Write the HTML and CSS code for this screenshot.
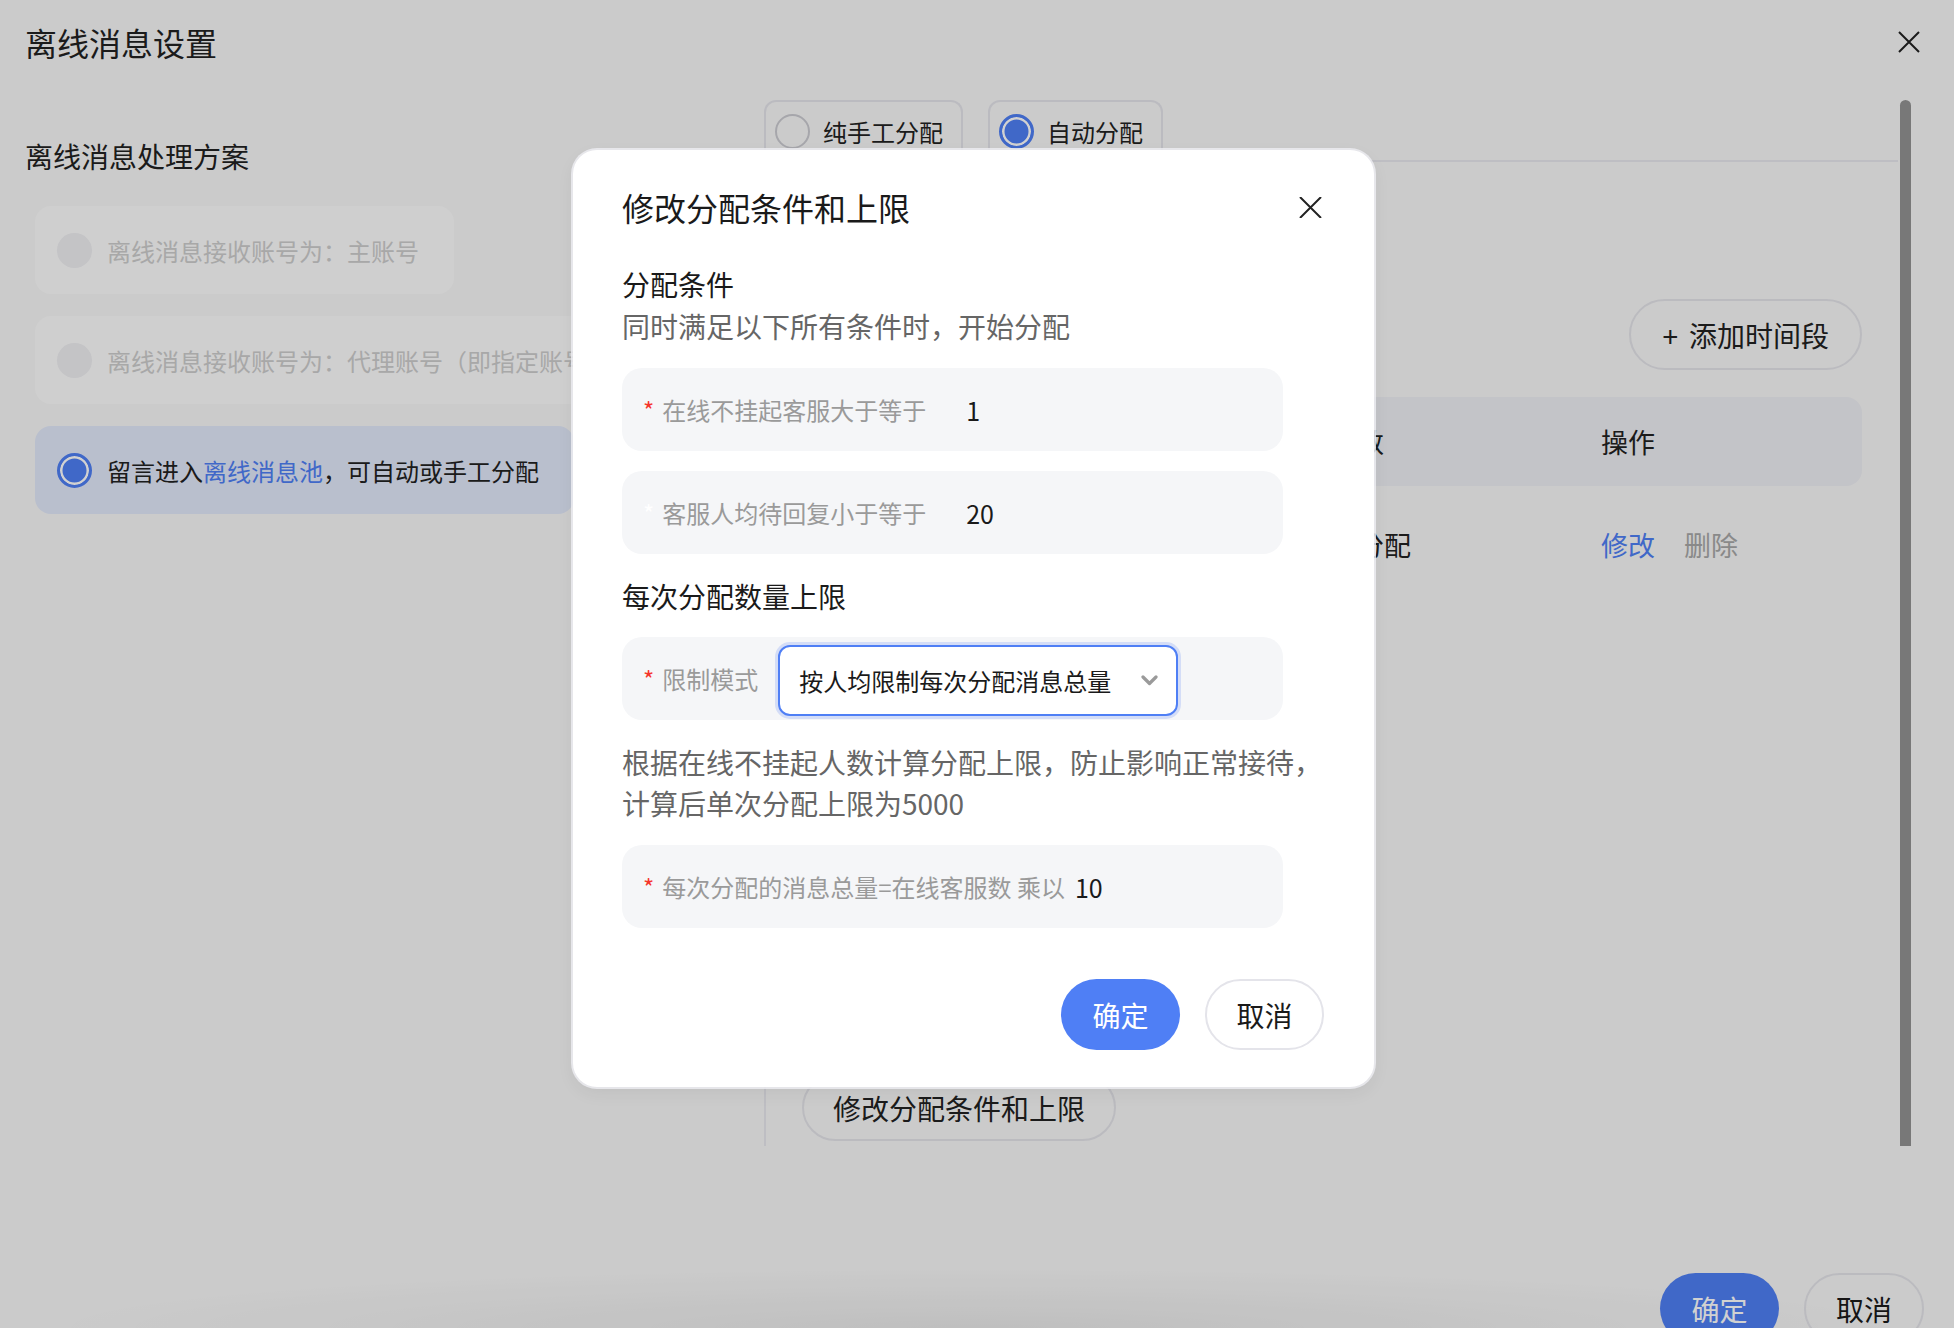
FILE: index.html
```html
<!DOCTYPE html>
<html lang="zh-CN">
<head>
<meta charset="utf-8">
<title>离线消息设置</title>
<link rel="stylesheet" href="styles.css">
</head>
<body>
<div class="page">
  <header class="page-head">
    <h1 class="page-title">离线消息设置</h1>
    <button class="icon-close" aria-label="关闭">
      <svg viewBox="0 0 22 22"><path d="M1 1L21 21M21 1L1 21"/></svg>
    </button>
  </header>

  <main class="page-body">
    <section class="plan-col">
      <h2 class="plan-title">离线消息处理方案</h2>
      <div class="plan-list">
        <label class="plan-card is-disabled"><span class="radio"></span><span>离线消息接收账号为：主账号</span></label>
        <label class="plan-card is-disabled"><span class="radio"></span><span>离线消息接收账号为：代理账号（即指定账号）</span></label>
        <label class="plan-card is-checked"><span class="radio"></span><span>留言进入<a class="link">离线消息池</a>，可自动或手工分配</span></label>
      </div>
    </section>

    <section class="assign-col">
      <div class="assign-tabs">
        <div class="assign-tab"><span class="radio"></span>纯手工分配</div>
        <div class="assign-tab is-checked"><span class="radio"></span>自动分配</div>
      </div>
      <div class="assign-panel">
        <div class="toolbar">
          <button class="btn-outline btn-add"><span class="plus">+</span>添加时间段</button>
        </div>
        <div class="table">
          <div class="tr th"><span></span><span>分配数</span><span>操作</span></div>
          <div class="tr td"><span></span><span>自动分配</span><span class="ops"><a class="link">修改</a><a class="muted">删除</a></span></div>
        </div>
        <button class="btn-outline btn-edit">修改分配条件和上限</button>
      </div>
    </section>

    <div class="scrollbar"></div>
  </main>

  <footer class="page-foot">
    <button class="btn-primary">确定</button>
    <button class="btn-default">取消</button>
  </footer>
</div>

<div class="mask"></div>

<div class="modal" role="dialog">
  <div class="modal-head">
    <h3 class="modal-title">修改分配条件和上限</h3>
    <button class="modal-close" aria-label="关闭">
      <svg viewBox="0 0 23 21"><path d="M1 0L22 21M22 0L1 21"/></svg>
    </button>
  </div>

  <div class="sec-title first">分配条件</div>
  <div class="sec-desc">同时满足以下所有条件时，开始分配</div>

  <div class="field field-first">
    <span class="req">*</span>
    <span class="field-label wide">在线不挂起客服大于等于</span>
    <span class="field-value">1</span>
  </div>
  <div class="field">
    <span class="req is-faint">*</span>
    <span class="field-label wide">客服人均待回复小于等于</span>
    <span class="field-value">20</span>
  </div>

  <div class="sec-title second">每次分配数量上限</div>

  <div class="field">
    <span class="req">*</span>
    <span class="field-label">限制模式</span>
    <div class="select">
      <span>按人均限制每次分配消息总量</span>
      <svg class="chev" viewBox="0 0 17 11"><path d="M2 2L8.5 8.5L15 2"/></svg>
    </div>
  </div>

  <p class="note">根据在线不挂起人数计算分配上限，防止影响正常接待，<br>计算后单次分配上限为5000</p>

  <div class="field field-last">
    <span class="req">*</span>
    <span class="field-label">每次分配的消息总量=在线客服数 乘以</span>
    <span class="field-value tight">10</span>
  </div>

  <div class="modal-foot">
    <button class="btn-primary">确定</button>
    <button class="btn-default">取消</button>
  </div>
</div>
</body>
</html>
```

FILE: styles.css
```css
* {
  box-sizing: border-box;
  margin: 0;
  padding: 0;
}

html,
body {
  width: 1954px;
  height: 1328px;
  overflow: hidden;
}

body {
  position: relative;
  font-family: "Noto Sans CJK SC", "Noto Sans", sans-serif;
  color: #222;
  background: #f8f8f8;
}

button {
  font-family: inherit;
  background: none;
  border: none;
  color: inherit;
  cursor: pointer;
}

.link {
  color: #4f7ff5;
}

.muted {
  color: #a8a8a8;
}

/* ---------- page ---------- */
.page {
  height: 1328px;
  display: flex;
  flex-direction: column;
}

.page-head {
  flex: none;
  height: 100px;
  display: flex;
  justify-content: space-between;
  align-items: flex-start;
  padding: 22px 34px 0 25px;
}

.page-title {
  font-size: 32px;
  line-height: 40px;
  font-weight: 400;
  color: #222;
}

.icon-close {
  width: 22px;
  height: 40px;
  display: flex;
  align-items: center;
  justify-content: center;
}

.icon-close svg {
  width: 22px;
  height: 22px;
  fill: none;
  stroke: #222;
  stroke-width: 2;
}

.page-body {
  flex: none;
  height: 1046px;
  display: flex;
}

/* left column */
.plan-col {
  flex: none;
  width: 764px;
  padding-left: 25px;
}

.plan-title {
  margin-top: 36px;
  font-size: 28px;
  line-height: 40px;
  font-weight: 400;
}

.plan-list {
  margin: 30px 0 0 10px;
  display: flex;
  flex-direction: column;
  align-items: flex-start;
  gap: 22px;
}

.plan-card {
  height: 88px;
  display: flex;
  align-items: center;
  gap: 15px;
  padding: 0 35px 0 22px;
  border-radius: 16px;
  background: #fdfdfd;
  font-size: 24px;
  white-space: nowrap;
}

.plan-card.is-disabled {
  color: #cdcdcd;
}

.plan-card.is-disabled .radio {
  background: #efeff2;
}

.plan-card.is-checked {
  background: #e2e9fa;
  color: #222;
}

.radio {
  flex: none;
  width: 35px;
  height: 35px;
  border-radius: 50%;
}

.is-checked .radio {
  background: #4f7ff5;
  border: 3px solid #4f7ff5;
  box-shadow: inset 0 0 0 2.5px #fff;
}

/* right column */
.assign-col {
  flex: none;
  width: 1134px;
  display: flex;
  flex-direction: column;
}

.assign-tabs {
  flex: none;
  height: 60px;
  display: flex;
  gap: 25px;
}

.assign-tab {
  height: 60px;
  display: flex;
  align-items: center;
  gap: 13px;
  padding: 0 18px 0 9px;
  border: 2px solid #e5e5eb;
  border-bottom: none;
  border-radius: 12px 12px 0 0;
  font-size: 24px;
  color: #222;
}

.assign-tab .radio {
  border: 2px solid #cbcbd1;
}

.assign-tab.is-checked .radio {
  border: 3px solid #4f7ff5;
}

.assign-panel {
  flex: 1;
  display: flex;
  flex-direction: column;
  padding: 0 36px 5px 36px;
  border-top: 2px solid #e8e8ee;
  border-left: 2px solid #e8e8ee;
}

.toolbar {
  margin-top: 137px;
  display: flex;
  justify-content: flex-end;
}

.btn-outline {
  height: 71px;
  border: 2px solid #e4e4ea;
  border-radius: 36px;
  font-size: 28px;
  line-height: 40px;
  color: #222;
  display: flex;
  align-items: center;
}

.btn-add {
  padding: 0 31px;
}

.plus {
  margin-right: 11px;
}

.btn-edit {
  margin-top: auto;
  align-self: flex-start;
  height: 67px;
  padding: 0 29px;
}

.table {
  margin-top: 27px;
}

.tr {
  display: grid;
  grid-template-columns: 501px 298px 1fr;
  align-items: center;
  font-size: 27px;
  color: #222;
}

.th {
  height: 89px;
  border-radius: 16px;
  background: #eeeff4;
}

.td {
  height: 116px;
}

.ops {
  display: flex;
  gap: 29px;
}

.scrollbar {
  flex: none;
  width: 11px;
  height: 1046px;
  margin-left: 2px;
  border-radius: 6px 6px 0 0;
  background: #939393;
}

/* footer */
.page-foot {
  flex: none;
  height: 182px;
  display: flex;
  justify-content: flex-end;
  gap: 25px;
  padding: 127px 30px 0 0;
  background: radial-gradient(ellipse 48% 60px at 50% 100%, rgba(0, 0, 0, 0.06), rgba(0, 0, 0, 0));
}

.btn-primary,
.btn-default {
  flex: none;
  width: 119px;
  height: 71px;
  border-radius: 36px;
  font-size: 28px;
  display: flex;
  align-items: center;
  justify-content: center;
}

.btn-primary {
  background: #4f7ff5;
  color: #fff;
}

.btn-default {
  border: 2px solid #e4e4ea;
  color: #1a1a1a;
}

.page-foot .btn-default {
  width: 120px;
}

/* ---------- mask + modal ---------- */
.mask {
  position: absolute;
  inset: 0;
  z-index: 10;
  background: rgba(0, 0, 0, 0.18);
}

.modal {
  position: absolute;
  left: 573px;
  top: 150px;
  z-index: 20;
  width: 801px;
  height: 937px;
  padding: 35px 50px 37px 49px;
  display: flex;
  flex-direction: column;
  background: #fff;
  border-radius: 24px;
  box-shadow: 0 0 0 2px rgba(236, 236, 241, 0.85), 0 6px 18px rgba(0, 0, 0, 0.06);
}

.modal-head {
  height: 44px;
  display: flex;
  justify-content: space-between;
  align-items: center;
}

.modal-title {
  font-size: 32px;
  line-height: 44px;
  font-weight: 400;
  color: #1a1a1a;
}

.modal-close {
  width: 23px;
  height: 44px;
  margin-right: 2px;
  display: flex;
  align-items: center;
  justify-content: center;
}

.modal-close svg {
  width: 23px;
  height: 21px;
  fill: none;
  stroke: #222;
  stroke-width: 2;
}

.sec-title {
  font-size: 28px;
  line-height: 42px;
  color: #1a1a1a;
}

.sec-title.first {
  margin-top: 34px;
}

.sec-title.second {
  margin-top: 21px;
}

.sec-desc {
  font-size: 28px;
  line-height: 42px;
  color: #666;
}

.field {
  width: 661px;
  height: 83px;
  flex: none;
  margin-top: 20px;
  padding-left: 21px;
  display: flex;
  align-items: center;
  border-radius: 20px;
  background: #f5f6f8;
  font-size: 24px;
  line-height: 34px;
  white-space: nowrap;
}

.field-first,
.field-last {
  margin-top: 21px;
}

.req {
  color: #f5342a;
  margin-right: 8px;
}

.req.is-faint {
  color: #ffffff;
}

.field-label {
  color: #9a9a9a;
}

.field-label.wide {
  margin-right: 40px;
}

.field-value {
  color: #1a1a1a;
  font-size: 25px;
}

.field-value.tight {
  margin-left: 10px;
}

.select {
  margin: 4px 0 0 20px;
  width: 400px;
  height: 71px;
  display: flex;
  align-items: center;
  justify-content: space-between;
  padding: 0 18px 0 19px;
  border: 2px solid #4f7ff5;
  border-radius: 12px;
  box-shadow: 0 0 0 3px rgba(79, 127, 245, 0.2);
  background: #fff;
  color: #1a1a1a;
}

.chev {
  width: 17px;
  height: 11px;
  fill: none;
  stroke: #9a9a9a;
  stroke-width: 3.2;
  stroke-linecap: round;
  stroke-linejoin: round;
}

.note {
  margin-top: 22px;
  font-size: 28px;
  line-height: 41px;
  color: #666;
}

.modal-foot {
  margin-top: 51px;
  display: flex;
  justify-content: flex-end;
  gap: 25px;
}
```
